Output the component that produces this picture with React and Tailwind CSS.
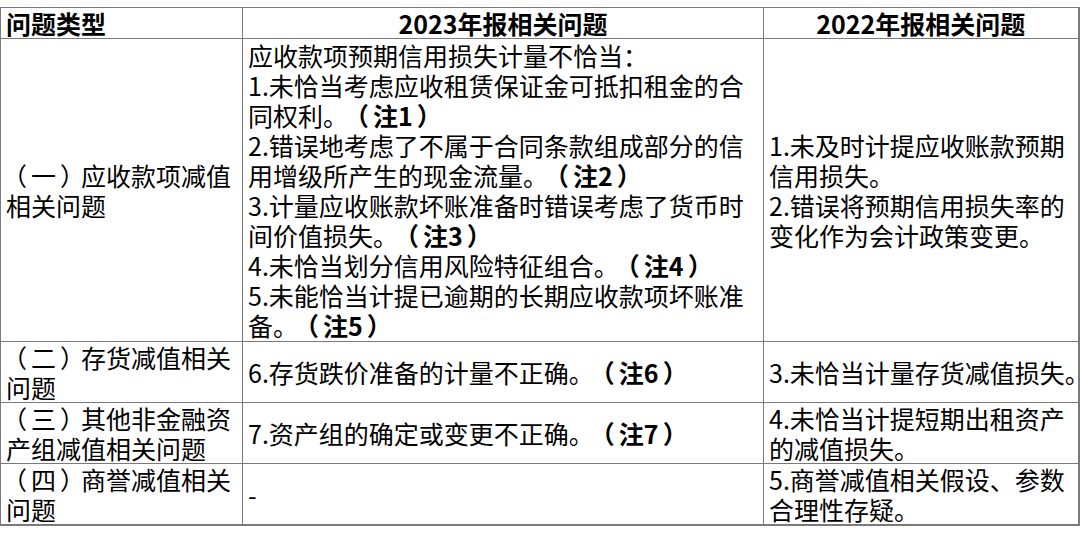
import React from 'react'

// 全角括号：字形居中一些（参考图里括号与文字间有空隙）
const L = () => <span className="-ml-[4px] mr-[4px]">（</span>
const R = () => <span className="ml-[4px] -mr-[4px]">）</span>

const Note = ({ n }) => (
  <span className="font-bold"><L />注{n}<R /></span>
)

const Type = ({ num, text }) => (
  <><L />{num}<R />{text}</>
)

const rows = [
  {
    h: 'h-[303px]',
    type: [<Type num="一" text="应收款项减值" />, '相关问题'],
    y2023: [
      '应收款项预期信用损失计量不恰当：',
      '1.未恰当考虑应收租赁保证金可抵扣租金的合',
      <>同权利。<Note n={1} /></>,
      '2.错误地考虑了不属于合同条款组成部分的信',
      <>用增级所产生的现金流量。<Note n={2} /></>,
      '3.计量应收账款坏账准备时错误考虑了货币时',
      <>间价值损失。<Note n={3} /></>,
      <>4.未恰当划分信用风险特征组合。<Note n={4} /></>,
      '5.未能恰当计提已逾期的长期应收款项坏账准',
      <>备。<Note n={5} /></>,
    ],
    y2022: ['1.未及时计提应收账款预期', '信用损失。', '2.错误将预期信用损失率的', '变化作为会计政策变更。'],
  },
  {
    h: 'h-[60px]',
    type: [<Type num="二" text="存货减值相关" />, '问题'],
    y2023: [<>6.存货跌价准备的计量不正确。<Note n={6} /></>],
    y2022: ['3.未恰当计量存货减值损失。'],
  },
  {
    h: 'h-[61px]',
    type: [<Type num="三" text="其他非金融资" />, '产组减值相关问题'],
    y2023: [<>7.资产组的确定或变更不正确。<Note n={7} /></>],
    y2022: ['4.未恰当计提短期出租资产', '的减值损失。'],
  },
  {
    h: 'h-[61px]',
    type: [<Type num="四" text="商誉减值相关" />, '问题'],
    y2023: ['-'],
    y2022: ['5.商誉减值相关假设、参数', '合理性存疑。'],
  },
]

const Lines = ({ lines }) => (
  <>
    {lines.map((l, i) => (
      <div key={i} className="whitespace-nowrap">{l}</div>
    ))}
  </>
)

const cell = 'border border-[#7a7a7a] px-[5px] py-0 align-middle text-left overflow-visible'

const App = () => {
  return (
    <div
      className="w-[1080px] h-[539px] bg-white pt-[7px] text-black text-[25px] leading-[30px] [text-spacing-trim:space-all]"
      style={{ fontFamily: '"Noto Sans CJK SC", "Noto Sans", sans-serif' }}
    >
      <table className="border-collapse table-fixed w-[1078px] border-r-2 border-b-2 border-[#7a7a7a]">
        <colgroup>
          <col className="w-[242px]" />
          <col className="w-[521px]" />
          <col className="w-[315px]" />
        </colgroup>
        <thead>
          <tr className="h-[30px] font-bold">
            <th className={cell}>问题类型</th>
            <th className={cell + ' !text-center'}>2023年报相关问题</th>
            <th className={cell + ' !text-center'}>2022年报相关问题</th>
          </tr>
        </thead>
        <tbody>
          {rows.map((r, i) => (
            <tr key={i} className={r.h}>
              <td className={cell}><Lines lines={r.type} /></td>
              <td className={cell}><Lines lines={r.y2023} /></td>
              <td className={cell}><Lines lines={r.y2022} /></td>
            </tr>
          ))}
        </tbody>
      </table>
    </div>
  )
}

export default App
